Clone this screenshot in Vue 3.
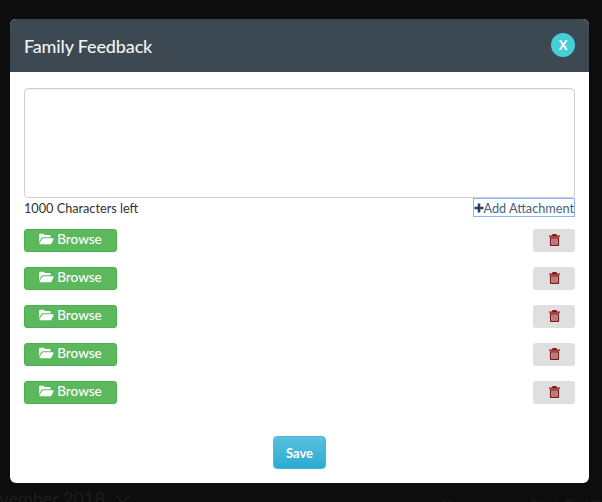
<template>
  <div class="page">
    <div class="backdrop-text month">November 2018 <span class="chev"></span></div>
    <div class="backdrop-text col-name">Name</div>
    <div class="backdrop-text col-date">Start-End D</div>
    <section class="modal">
      <header class="modal-head">
        <h1 class="title">Family Feedback</h1>
        <button class="close">X</button>
      </header>
      <div class="modal-body">
        <div class="textarea"></div>
        <div class="meta">
          <span class="count">1000 Characters left</span>
          <a class="attach">
            <svg class="plus" viewBox="0 0 10 10" width="10" height="10"><path d="M3.7 0.5h2.6v3.2h3.2v2.6H6.3v3.2H3.7V6.3H0.5V3.7h3.2z" /></svg>Add Attachment
          </a>
        </div>
        <div class="rows">
          <div v-for="n in 5" :key="n" class="row">
            <button class="browse">
              <svg class="folder" viewBox="0 0 16 13" width="15" height="12"><path d="M0 2.2C0 1.3.6.7 1.4.7h3.2c.6 0 1 .3 1.2.8l.3.6h5c.8 0 1.4.6 1.4 1.3v1.1H4.2c-.8 0-1.5.4-1.9 1.1L0 9.9z" /><path d="M3.4 6.4c.2-.4.5-.6 1-.6h10.4c.7 0 1.1.7.8 1.3l-2.4 4.5c-.2.4-.6.6-1 .6H1.2c-.7 0-1.1-.7-.8-1.3z" /></svg>
              Browse
            </button>
            <button class="trash">
              <svg viewBox="0 0 12 13" width="11" height="12"><path fill-rule="evenodd" d="M4 0h4l.8 1.5H12v1.5H0V1.5h3.2zM1 3.6h10V12c0 .6-.4 1-1 1H2c-.6 0-1-.4-1-1zM2.5 5v6.5h7V5z" fill="#8c1212" /><rect x="2.5" y="5" width="7" height="6.5" fill="#ac8080" /></svg>
            </button>
          </div>
        </div>
        <div class="actions">
          <button class="save">Save</button>
        </div>
      </div>
    </section>
  </div>
</template>

<script setup>
</script>

<style>
html, body { margin: 0; background: #0d0d0d; }
</style>

<style scoped>
.page {
  position: relative;
  width: 602px;
  height: 502px;
  overflow: hidden;
  background: #0d0d0d;
  padding: 19px 0 0 10px;
  box-sizing: border-box;
  font-family: Lato, "Open Sans", sans-serif;
}
.backdrop-text {
  position: absolute;
  color: #1d1d1d;
  white-space: nowrap;
}
.month { left: -24px; top: 487px; font-size: 18px; }
.chev {
  display: inline-block;
  width: 9px;
  height: 9px;
  margin: 0 0 4px 8px;
  border-right: 1px solid #1d1d1d;
  border-bottom: 1px solid #1d1d1d;
  transform: rotate(45deg);
}
.col-name { left: 441px; top: 496px; font-size: 14px; }
.col-date { left: 530px; top: 496px; font-size: 14px; }
.modal {
  position: relative;
  width: 579px;
  height: 464px;
  background: #fff;
  border-radius: 6px;
  overflow: hidden;
}
.modal-head {
  height: 53px;
  background: #3c4952;
  display: flex;
  align-items: center;
  justify-content: space-between;
  padding: 0 14px 2px 14px;
  box-sizing: border-box;
}
.title {
  margin: 2px 0 0;
  font-size: 18px;
  font-weight: 500;
  letter-spacing: -0.15px;
  color: #f0f3f4;
}
.close {
  width: 24px;
  height: 24px;
  padding: 0;
  border: 0;
  border-radius: 50%;
  background: #44cfd8;
  color: #fff;
  font: 700 13px Lato, sans-serif;
}
.modal-body { padding: 16px 14px 0; }
.textarea {
  height: 108px;
  border: 1px solid #cfcfcf;
  border-radius: 4px;
  box-shadow: inset 0 1px 1px rgba(0, 0, 0, 0.07);
}
.meta {
  display: flex;
  justify-content: space-between;
  align-items: flex-start;
  height: 19px;
  font-size: 12.7px;
  color: #333;
}
.count { line-height: 20px; }
.attach {
  display: flex;
  align-items: center;
  height: 19px;
  box-sizing: border-box;
  border: 1px solid #8ab4f8;
  color: #3f5f80;
}
.plus { fill: #23426b; flex: none; }
.rows {
  display: flex;
  flex-direction: column;
  gap: 15px;
  margin-top: 12px;
}
.row {
  display: flex;
  justify-content: space-between;
  height: 23px;
}
.browse {
  width: 93px;
  height: 23px;
  padding: 0 0 3px;
  display: flex;
  align-items: center;
  justify-content: center;
  gap: 3px;
  background: #5cb85c;
  border: 1px solid #4cae4c;
  border-radius: 3px;
  color: #fff;
  font: 500 13.5px Lato, sans-serif;
}
.folder { fill: #fff; flex: none; }
.trash {
  width: 42px;
  height: 23px;
  padding: 0 0 1px;
  display: flex;
  align-items: center;
  justify-content: center;
  background: #dfdfdf;
  border: 0;
  border-radius: 3px;
}
.actions {
  display: flex;
  justify-content: center;
  margin-top: 32px;
}
.save {
  width: 53px;
  height: 33px;
  padding: 0;
  background: linear-gradient(#5bc0de, #2aabd2);
  border: 1px solid #46b8da;
  border-radius: 4px;
  color: #fff;
  font: 700 13px Lato, sans-serif;
}
</style>
